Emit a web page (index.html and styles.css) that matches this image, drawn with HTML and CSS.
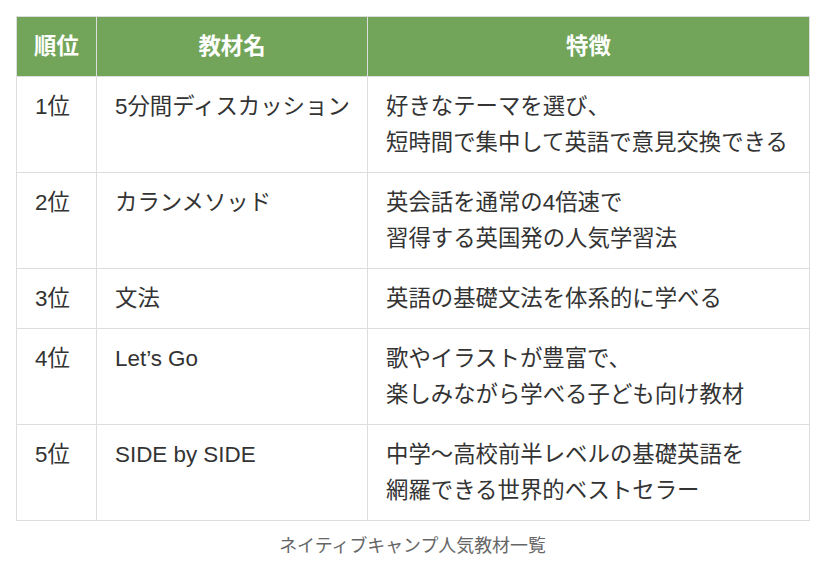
FILE: index.html
```html
<!DOCTYPE html>
<html lang="ja">
<head>
<meta charset="utf-8">
<link rel="stylesheet" href="styles.css">
</head>
<body>
<figure class="table-wrap">
  <table class="ranking">
    <colgroup>
      <col class="c-rank">
      <col class="c-name">
      <col class="c-desc">
    </colgroup>
    <thead>
      <tr><th>順位</th><th>教材名</th><th>特徴</th></tr>
    </thead>
    <tbody>
      <tr><td>1位</td><td>5分間ディスカッション</td><td>好きなテーマを選び、<br>短時間で集中して英語で意見交換できる</td></tr>
      <tr><td>2位</td><td>カランメソッド</td><td>英会話を通常の4倍速で<br>習得する英国発の人気学習法</td></tr>
      <tr><td>3位</td><td>文法</td><td>英語の基礎文法を体系的に学べる</td></tr>
      <tr><td>4位</td><td>Let’s Go</td><td>歌やイラストが豊富で、<br>楽しみながら学べる子ども向け教材</td></tr>
      <tr><td>5位</td><td>SIDE by SIDE</td><td>中学〜高校前半レベルの基礎英語を<br>網羅できる世界的ベストセラー</td></tr>
    </tbody>
  </table>
  <figcaption class="caption">ネイティブキャンプ人気教材一覧</figcaption>
</figure>
</body>
</html>
```
FILE: styles.css
```css
html, body {
  margin: 0;
  padding: 0;
  background: #ffffff;
}
body {
  font-family: "Liberation Sans", "Noto Sans CJK JP", sans-serif;
  color: #333333;
}
.table-wrap {
  margin: 0;
  padding: 16px 0 0 16px;
}
.ranking {
  width: 793px;
  border-collapse: collapse;
  table-layout: fixed;
  font-size: 22.4px;
  line-height: 36px;
}
.c-rank { width: 80px; }
.c-name { width: 271px; }
.c-desc { width: 442px; }
.ranking th,
.ranking td {
  border: 1px solid #dddddd;
  padding: 12px 6px 11px 18px;
  vertical-align: top;
  text-align: left;
  white-space: nowrap;
}
.ranking th {
  background: #72a55a;
  color: #ffffff;
  font-weight: bold;
  text-align: center;
  padding: 12px 4px 11px;
}
.caption {
  width: 793px;
  text-align: center;
  font-size: 17.92px;
  line-height: 27px;
  color: #666666;
  margin-top: 12px;
}
```
